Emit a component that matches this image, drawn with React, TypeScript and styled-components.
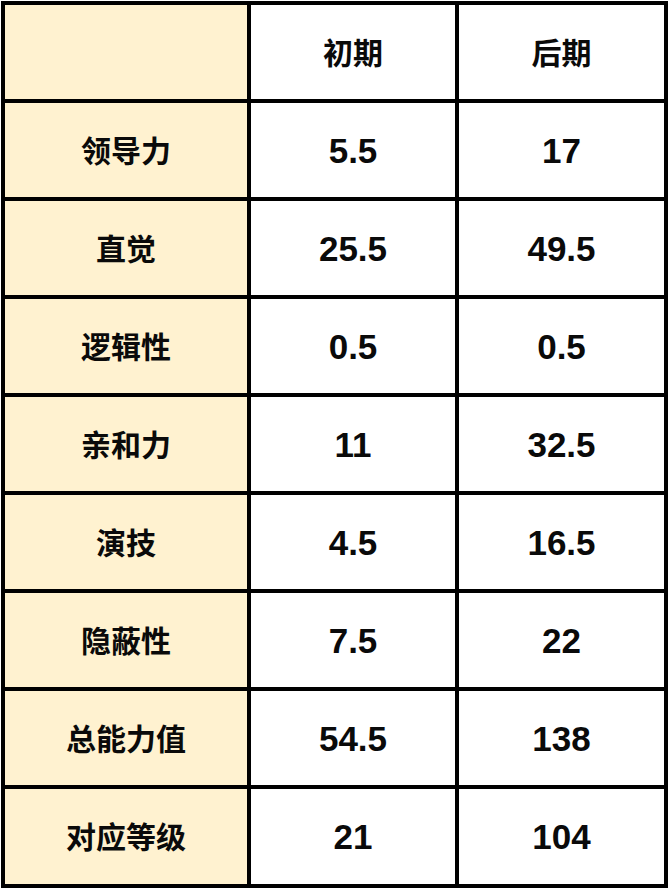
import React from "react";
import styled, { createGlobalStyle } from "styled-components";

const Global = createGlobalStyle`
  html, body { margin: 0; padding: 0; background: #ffffff; }
  body { font-family: "Liberation Sans", "Noto Sans CJK SC", Arial, sans-serif; }
`;

const Table = styled.div`
  margin: 1px 0 0 1px;
  display: grid;
  grid-template-columns: 242px 204px 205px;
  grid-template-rows: repeat(8, 94px) 95px;
  gap: 4px;
  padding: 4px;
  width: max-content;
  background: #000000;
`;

const Cell = styled.div<{ $label?: boolean; $num?: boolean }>`
  background: ${(p) => (p.$label ? "#fff2d0" : "#ffffff")};
  display: flex;
  align-items: center;
  justify-content: center;
  padding-top: ${(p) => (p.$num ? "0" : "3px")};
  font-family: "Liberation Sans", "Noto Sans CJK SC", Arial, sans-serif;
  font-weight: 700;
  font-size: ${(p) => (p.$num ? "35px" : "30px")};
  color: #0a0a0a;
  line-height: 1;
`;

const rows: [string, string, string][] = [
  ["领导力", "5.5", "17"],
  ["直觉", "25.5", "49.5"],
  ["逻辑性", "0.5", "0.5"],
  ["亲和力", "11", "32.5"],
  ["演技", "4.5", "16.5"],
  ["隐蔽性", "7.5", "22"],
  ["总能力值", "54.5", "138"],
  ["对应等级", "21", "104"],
];

export default function App() {
  return (
    <>
      <Global />
      <Table>
        <Cell $label />
        <Cell>初期</Cell>
        <Cell>后期</Cell>
        {rows.map(([name, a, b]) => (
          <React.Fragment key={name}>
            <Cell $label>{name}</Cell>
            <Cell $num>{a}</Cell>
            <Cell $num>{b}</Cell>
          </React.Fragment>
        ))}
      </Table>
    </>
  );
}
